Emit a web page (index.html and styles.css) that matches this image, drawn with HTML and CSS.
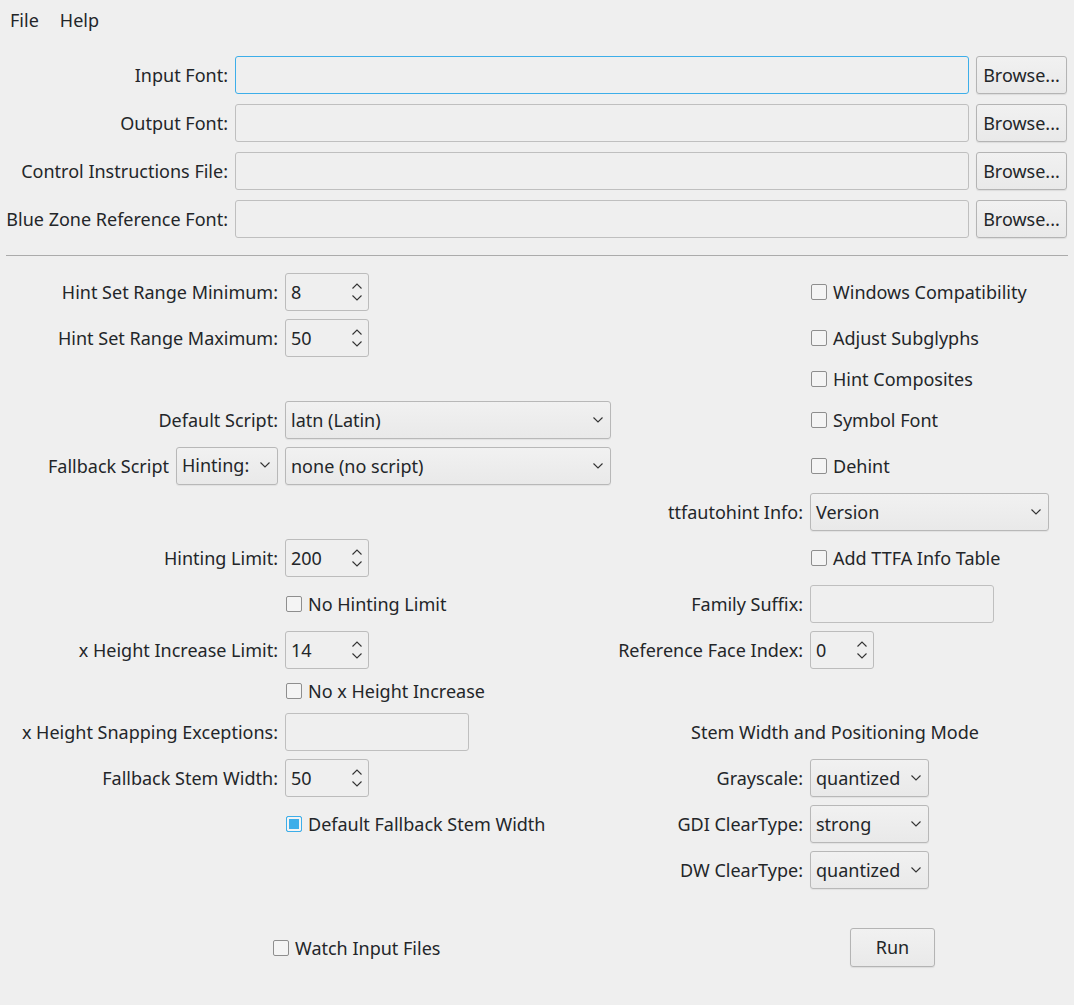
FILE: index.html
```html
<!DOCTYPE html>
<html>
<head>
<meta charset="utf-8">
<link rel="stylesheet" href="styles.css">
</head>
<body>
<div class="menubar"><span class="menu-item">File</span><span class="menu-item">Help</span></div>

<div class="files">
  <label class="lbl">Input Font:</label><div class="field focus"></div><button class="btn">Browse...</button>
  <label class="lbl">Output Font:</label><div class="field"></div><button class="btn">Browse...</button>
  <label class="lbl">Control Instructions File:</label><div class="field"></div><button class="btn">Browse...</button>
  <label class="lbl">Blue Zone Reference Font:</label><div class="field"></div><button class="btn">Browse...</button>
</div>

<hr class="sep">

<div class="form">
  <!-- row 1 -->
  <label class="lbl">Hint Set Range Minimum:</label>
  <div class="cell"><div class="spin w84"><span>8</span><svg class="arrows" width="12" height="20" viewBox="0 0 12 20"><path d="M1.5 6.5 L6 2 L10.5 6.5 M1.5 13.5 L6 18 L10.5 13.5" fill="none" stroke="#333" stroke-width="1.1"/></svg></div></div>
  <div></div>
  <div class="cell"><div class="chk"><span class="box"></span>Windows Compatibility</div></div>
  <!-- row 2 -->
  <label class="lbl">Hint Set Range Maximum:</label>
  <div class="cell"><div class="spin w84"><span>50</span><svg class="arrows" width="12" height="20" viewBox="0 0 12 20"><path d="M1.5 6.5 L6 2 L10.5 6.5 M1.5 13.5 L6 18 L10.5 13.5" fill="none" stroke="#333" stroke-width="1.1"/></svg></div></div>
  <div></div>
  <div class="cell"><div class="chk"><span class="box"></span>Adjust Subglyphs</div></div>
  <!-- row 3 -->
  <div></div><div></div><div></div>
  <div class="cell"><div class="chk"><span class="box"></span>Hint Composites</div></div>
  <!-- row 4 -->
  <label class="lbl">Default Script:</label>
  <div class="cell"><div class="combo wfull"><span>latn (Latin)</span><svg class="chev" width="12" height="8" viewBox="0 0 12 8"><path d="M1.5 1.5 L6 6 L10.5 1.5" fill="none" stroke="#333" stroke-width="1.1"/></svg></div></div>
  <div></div>
  <div class="cell"><div class="chk"><span class="box"></span>Symbol Font</div></div>
  <!-- row 5 -->
  <div class="lbl lbl-combo">Fallback Script<div class="combo w102"><span>Hinting:</span><svg class="chev" width="12" height="8" viewBox="0 0 12 8"><path d="M1.5 1.5 L6 6 L10.5 1.5" fill="none" stroke="#333" stroke-width="1.1"/></svg></div></div>
  <div class="cell"><div class="combo wfull"><span>none (no script)</span><svg class="chev" width="12" height="8" viewBox="0 0 12 8"><path d="M1.5 1.5 L6 6 L10.5 1.5" fill="none" stroke="#333" stroke-width="1.1"/></svg></div></div>
  <div></div>
  <div class="cell"><div class="chk"><span class="box"></span>Dehint</div></div>
  <!-- row 6 -->
  <div></div><div></div>
  <label class="lbl">ttfautohint Info:</label>
  <div class="cell"><div class="combo w239"><span>Version</span><svg class="chev" width="12" height="8" viewBox="0 0 12 8"><path d="M1.5 1.5 L6 6 L10.5 1.5" fill="none" stroke="#333" stroke-width="1.1"/></svg></div></div>
  <!-- row 7 -->
  <label class="lbl">Hinting Limit:</label>
  <div class="cell"><div class="spin w84"><span>200</span><svg class="arrows" width="12" height="20" viewBox="0 0 12 20"><path d="M1.5 6.5 L6 2 L10.5 6.5 M1.5 13.5 L6 18 L10.5 13.5" fill="none" stroke="#333" stroke-width="1.1"/></svg></div></div>
  <div></div>
  <div class="cell"><div class="chk"><span class="box"></span>Add TTFA Info Table</div></div>
  <!-- row 8 -->
  <div></div>
  <div class="cell"><div class="chk left"><span class="box"></span>No Hinting Limit</div></div>
  <label class="lbl">Family Suffix:</label>
  <div class="cell"><div class="field w184"></div></div>
  <!-- row 9 -->
  <label class="lbl">x Height Increase Limit:</label>
  <div class="cell"><div class="spin w84"><span>14</span><svg class="arrows" width="12" height="20" viewBox="0 0 12 20"><path d="M1.5 6.5 L6 2 L10.5 6.5 M1.5 13.5 L6 18 L10.5 13.5" fill="none" stroke="#333" stroke-width="1.1"/></svg></div></div>
  <label class="lbl">Reference Face Index:</label>
  <div class="cell"><div class="spin w64"><span>0</span><svg class="arrows" width="12" height="20" viewBox="0 0 12 20"><path d="M1.5 6.5 L6 2 L10.5 6.5 M1.5 13.5 L6 18 L10.5 13.5" fill="none" stroke="#333" stroke-width="1.1"/></svg></div></div>
  <!-- row 10 -->
  <div></div>
  <div class="cell"><div class="chk left"><span class="box"></span>No x Height Increase</div></div>
  <div></div><div></div>
  <!-- row 11 -->
  <label class="lbl">x Height Snapping Exceptions:</label>
  <div class="cell"><div class="field w184"></div></div>
  <div class="heading">Stem Width and Positioning Mode</div>
  <!-- row 12 -->
  <label class="lbl">Fallback Stem Width:</label>
  <div class="cell"><div class="spin w84"><span>50</span><svg class="arrows" width="12" height="20" viewBox="0 0 12 20"><path d="M1.5 6.5 L6 2 L10.5 6.5 M1.5 13.5 L6 18 L10.5 13.5" fill="none" stroke="#333" stroke-width="1.1"/></svg></div></div>
  <label class="lbl">Grayscale:</label>
  <div class="cell"><div class="combo w119"><span>quantized</span><svg class="chev" width="12" height="8" viewBox="0 0 12 8"><path d="M1.5 1.5 L6 6 L10.5 1.5" fill="none" stroke="#333" stroke-width="1.1"/></svg></div></div>
  <!-- row 13 -->
  <div></div>
  <div class="cell"><div class="chk left"><span class="box checked"></span>Default Fallback Stem Width</div></div>
  <label class="lbl">GDI ClearType:</label>
  <div class="cell"><div class="combo w119"><span>strong</span><svg class="chev" width="12" height="8" viewBox="0 0 12 8"><path d="M1.5 1.5 L6 6 L10.5 1.5" fill="none" stroke="#333" stroke-width="1.1"/></svg></div></div>
  <!-- row 14 -->
  <div></div><div></div>
  <label class="lbl">DW ClearType:</label>
  <div class="cell"><div class="combo w119"><span>quantized</span><svg class="chev" width="12" height="8" viewBox="0 0 12 8"><path d="M1.5 1.5 L6 6 L10.5 1.5" fill="none" stroke="#333" stroke-width="1.1"/></svg></div></div>
</div>

<div class="bottom">
  <div class="chk"><span class="box"></span>Watch Input Files</div>
  <button class="btn run">Run</button>
</div>
</body>
</html>
```
FILE: styles.css
```css
html, body {
  margin: 0;
  padding: 0;
  background: #efefef;
}
body {
  font-family: "Noto Sans", "DejaVu Sans", sans-serif;
  font-size: 18px;
  line-height: 24px;
  color: #232629;
  width: 1074px;
  height: 1005px;
  overflow: hidden;
}
.menubar {
  height: 40px;
  display: flex;
  align-items: center;
}
.menu-item {
  padding: 0 10px 0 10px;
  line-height: 40px;
}
.menu-item + .menu-item {
  padding-left: 11px;
}
.files {
  display: grid;
  grid-template-columns: 222px 1fr 91px;
  grid-auto-rows: 38px;
  column-gap: 7px;
  row-gap: 10px;
  padding: 16px 7px 0 6px;
}
.lbl {
  display: flex;
  align-items: center;
  justify-content: flex-end;
  white-space: nowrap;
  padding-bottom: 1px;
}
.field {
  box-sizing: border-box;
  height: 38px;
  border: 1px solid #bfbfbf;
  border-radius: 3px;
  background: #efefef;
}
.field.focus { border-color: #3daee9; }
.btn {
  box-sizing: border-box;
  height: 38px;
  border: 1px solid #b4b4b4;
  border-radius: 3px;
  background: linear-gradient(#f1f1f1, #e9e9e9);
  box-shadow: 0 1px 1px rgba(0,0,0,0.08);
  font: inherit;
  color: #232629;
  padding: 0 0 1px 0;
}
.sep {
  margin: 17px 6px 17px 6px;
  border: 0;
  border-top: 1px solid #ababab;
  height: 0;
}
.form {
  display: grid;
  grid-template-columns: 272px 326px 185px 258px;
  grid-template-rows: 38px 38px 28px 38px 38px 38px 38px 38px 38px 28px 38px 38px 38px 38px;
  column-gap: 7px;
  row-gap: 8px;
  padding: 0 6px;
}
.cell {
  display: flex;
  align-items: center;
}
.spin, .combo {
  box-sizing: border-box;
  height: 38px;
  border: 1px solid #bcbcbc;
  border-radius: 3px;
  display: flex;
  align-items: center;
  justify-content: space-between;
  padding: 0 8px 1px 5px;
}
.spin { background: #efefef; }
.combo {
  background: linear-gradient(#f1f1f1, #e9e9e9);
  border-color: #b8b8b8;
  box-shadow: 0 1px 1px rgba(0,0,0,0.06);
  padding-right: 6px;
}
.spin .arrows { margin-right: -3px; }
.w84 { width: 84px; }
.w64 { width: 64px; }
.w102 { width: 102px; }
.w119 { width: 119px; }
.w184 { width: 184px; }
.w239 { width: 239px; }
.wfull { width: 326px; }
.lbl-combo { gap: 7px; }
.chk {
  display: flex;
  align-items: center;
  gap: 6px;
  white-space: nowrap;
  margin-left: 1px;
}
.chk.left { margin-left: 1px; }
.box {
  box-sizing: border-box;
  width: 16px;
  height: 16px;
  border: 1px solid #8e8e8e;
  border-radius: 2px;
  background: #f4f4f4;
  flex: none;
}
.box.checked {
  border-color: #3daee9;
  background: #3daee9;
  box-shadow: inset 0 0 0 2px #f4f4f4;
}
.heading {
  grid-column: 3 / 5;
  display: flex;
  align-items: center;
  padding-left: 73px;
  padding-bottom: 1px;
}
.bottom {
  display: flex;
  align-items: center;
  margin-top: 39px;
  padding-left: 272px;
}
.bottom .run {
  width: 85px;
  height: 39px;
  margin-left: auto;
  margin-right: 139px;
}
```
